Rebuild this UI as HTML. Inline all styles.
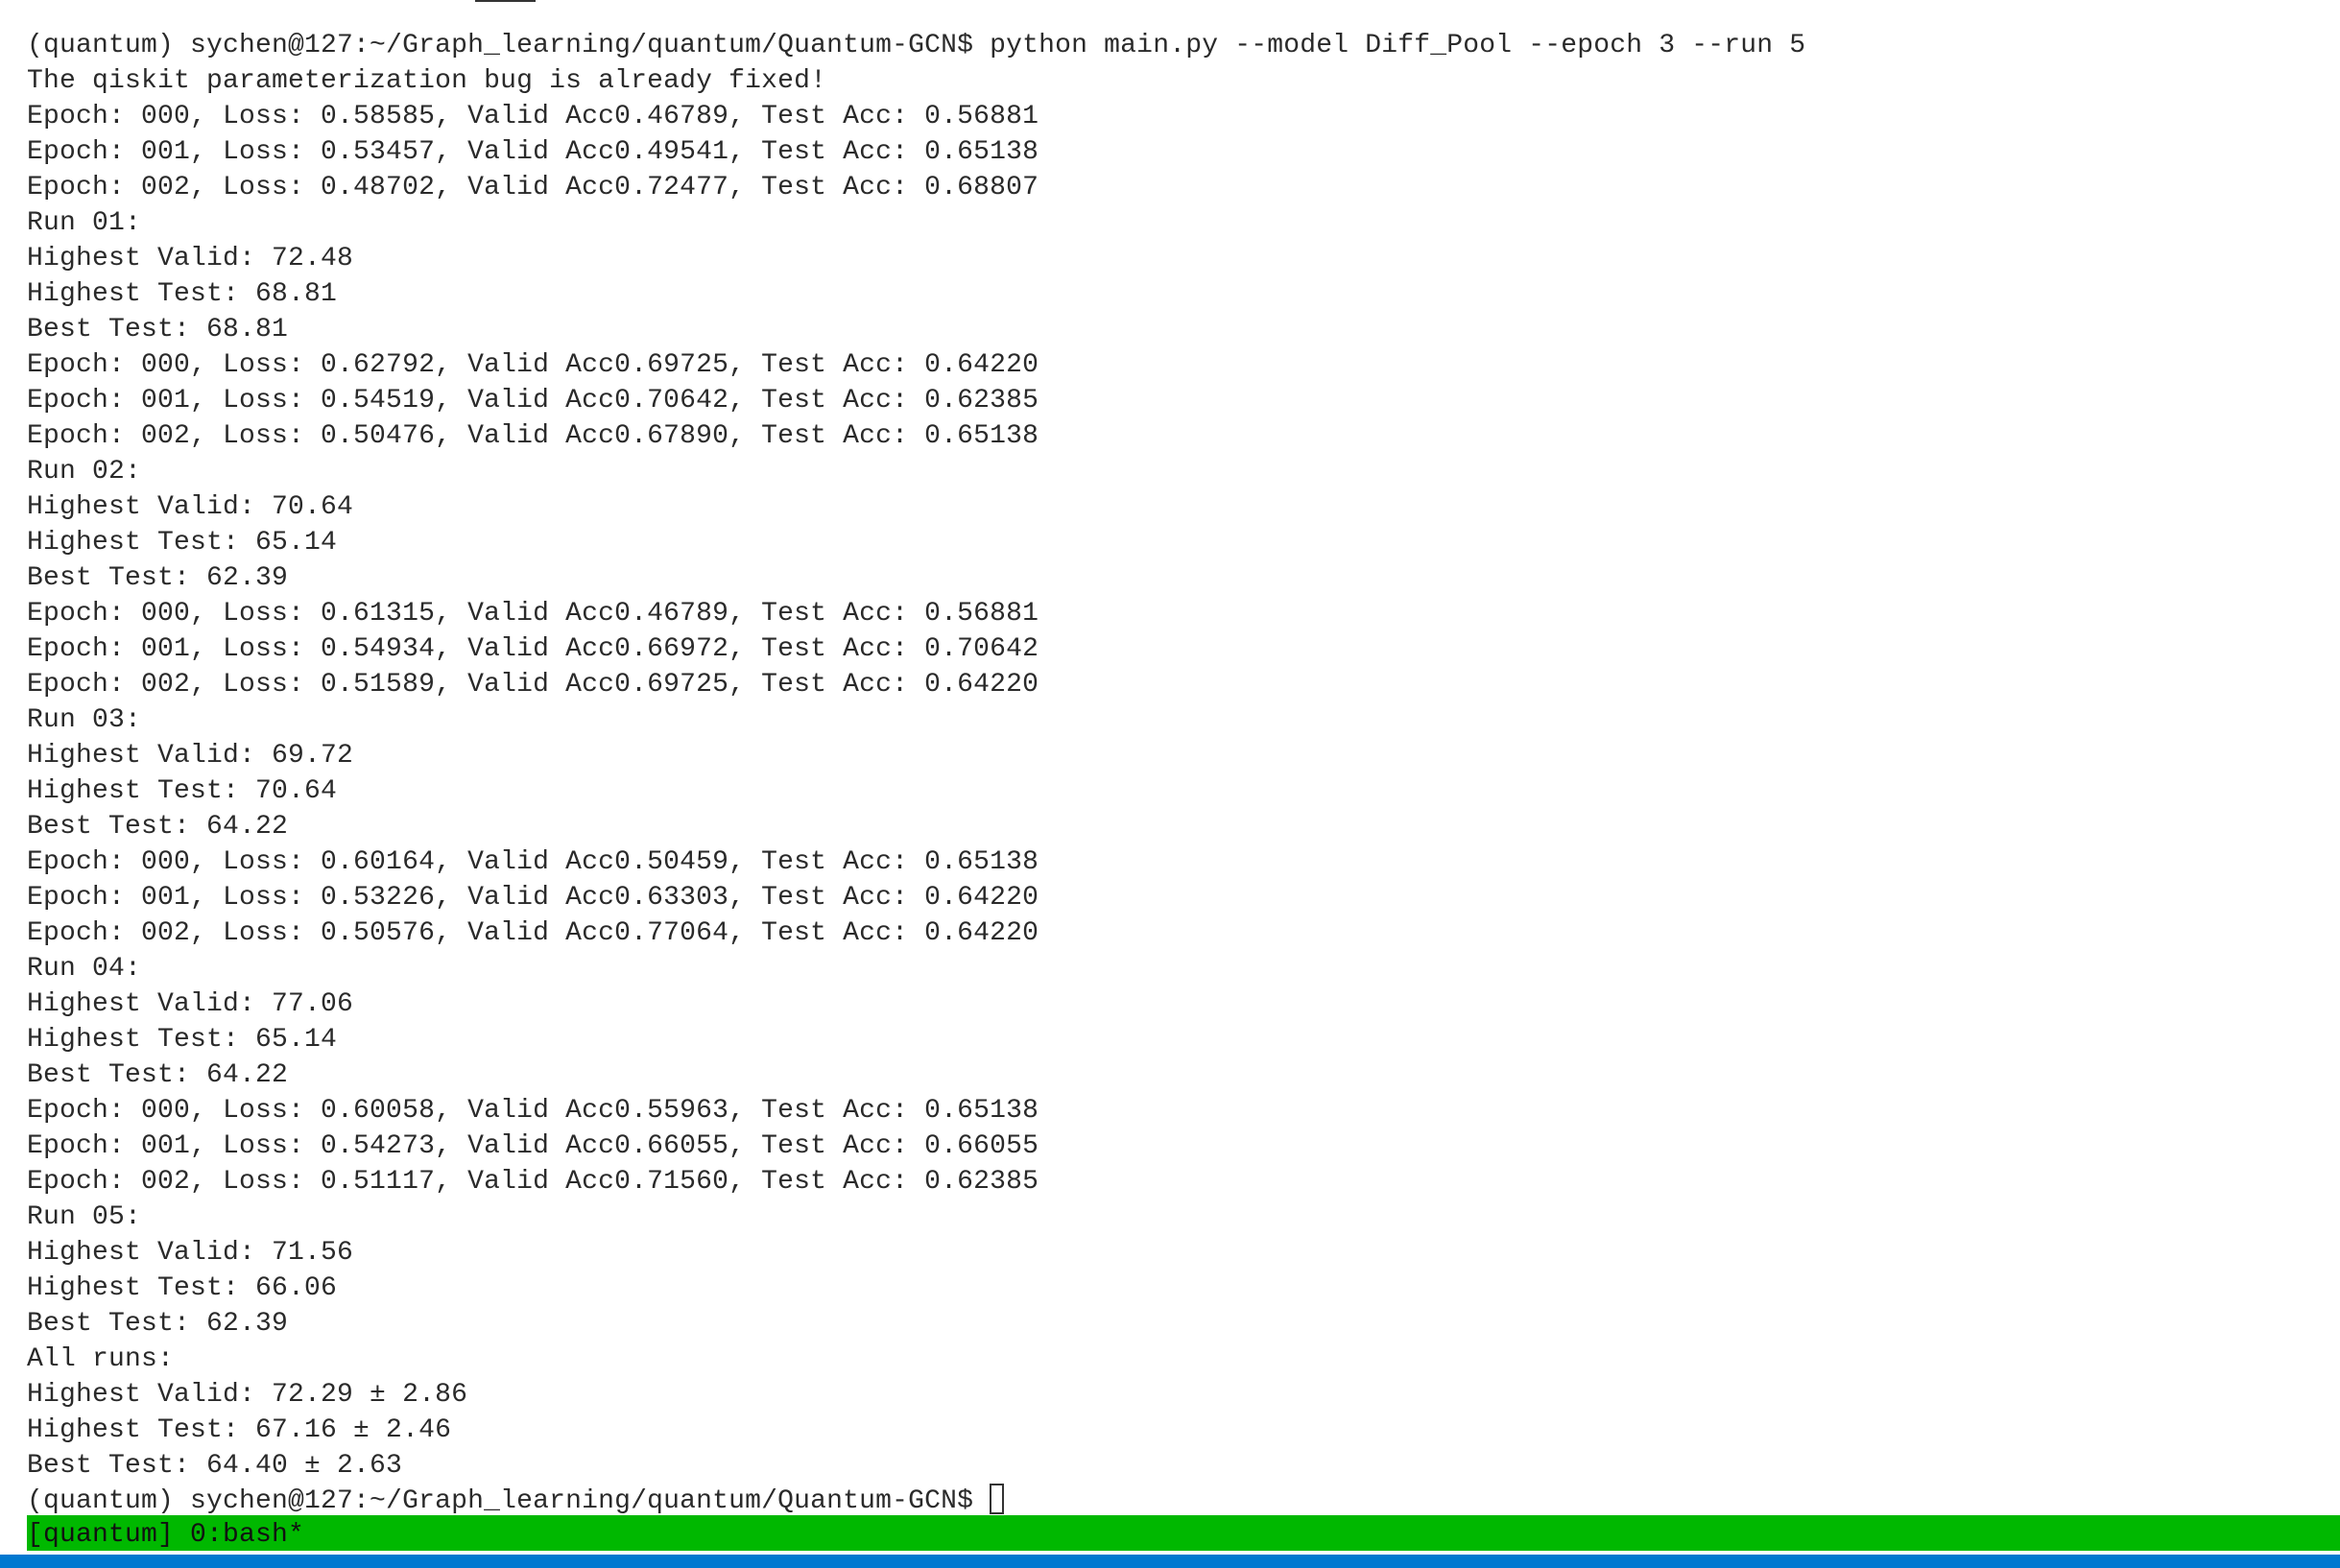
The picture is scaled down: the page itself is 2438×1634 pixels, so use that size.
<!DOCTYPE html>
<html><head><meta charset="utf-8"><style>
html,body{margin:0;padding:0;background:#fff;width:2438px;height:1634px;overflow:hidden;position:relative}
pre{position:absolute;left:28px;top:29px;margin:0;font-family:"Liberation Mono","DejaVu Sans Mono",monospace;font-size:28px;letter-spacing:0.2px;line-height:37px;color:#2a2a2a}
.cur{display:inline-block;width:15px;height:32px;border:2px solid #333;vertical-align:-7px;box-sizing:border-box}
.green{position:absolute;left:28px;right:0;top:1579px;height:37px;background:#00b800}
.green span{position:absolute;left:0;top:2px;line-height:37px;font-family:"Liberation Mono","DejaVu Sans Mono",monospace;font-size:28px;letter-spacing:0.2px;color:#111}
.blue{position:absolute;left:0;right:0;top:1620px;height:14px;background:#0078d0}
.tb{position:absolute;left:495px;top:0;width:63px;height:2px;background:#333}
</style></head><body>
<div class="tb"></div>
<pre>(quantum) sychen@127:~/Graph_learning/quantum/Quantum-GCN$ python main.py --model Diff_Pool --epoch 3 --run 5
The qiskit parameterization bug is already fixed!
Epoch: 000, Loss: 0.58585, Valid Acc0.46789, Test Acc: 0.56881
Epoch: 001, Loss: 0.53457, Valid Acc0.49541, Test Acc: 0.65138
Epoch: 002, Loss: 0.48702, Valid Acc0.72477, Test Acc: 0.68807
Run 01:
Highest Valid: 72.48
Highest Test: 68.81
Best Test: 68.81
Epoch: 000, Loss: 0.62792, Valid Acc0.69725, Test Acc: 0.64220
Epoch: 001, Loss: 0.54519, Valid Acc0.70642, Test Acc: 0.62385
Epoch: 002, Loss: 0.50476, Valid Acc0.67890, Test Acc: 0.65138
Run 02:
Highest Valid: 70.64
Highest Test: 65.14
Best Test: 62.39
Epoch: 000, Loss: 0.61315, Valid Acc0.46789, Test Acc: 0.56881
Epoch: 001, Loss: 0.54934, Valid Acc0.66972, Test Acc: 0.70642
Epoch: 002, Loss: 0.51589, Valid Acc0.69725, Test Acc: 0.64220
Run 03:
Highest Valid: 69.72
Highest Test: 70.64
Best Test: 64.22
Epoch: 000, Loss: 0.60164, Valid Acc0.50459, Test Acc: 0.65138
Epoch: 001, Loss: 0.53226, Valid Acc0.63303, Test Acc: 0.64220
Epoch: 002, Loss: 0.50576, Valid Acc0.77064, Test Acc: 0.64220
Run 04:
Highest Valid: 77.06
Highest Test: 65.14
Best Test: 64.22
Epoch: 000, Loss: 0.60058, Valid Acc0.55963, Test Acc: 0.65138
Epoch: 001, Loss: 0.54273, Valid Acc0.66055, Test Acc: 0.66055
Epoch: 002, Loss: 0.51117, Valid Acc0.71560, Test Acc: 0.62385
Run 05:
Highest Valid: 71.56
Highest Test: 66.06
Best Test: 62.39
All runs:
Highest Valid: 72.29 ± 2.86
Highest Test: 67.16 ± 2.46
Best Test: 64.40 ± 2.63
(quantum) sychen@127:~/Graph_learning/quantum/Quantum-GCN$ <span class="cur"></span></pre>
<div class="green"><span>[quantum] 0:bash*</span></div>
<div class="blue"></div>
</body></html>
